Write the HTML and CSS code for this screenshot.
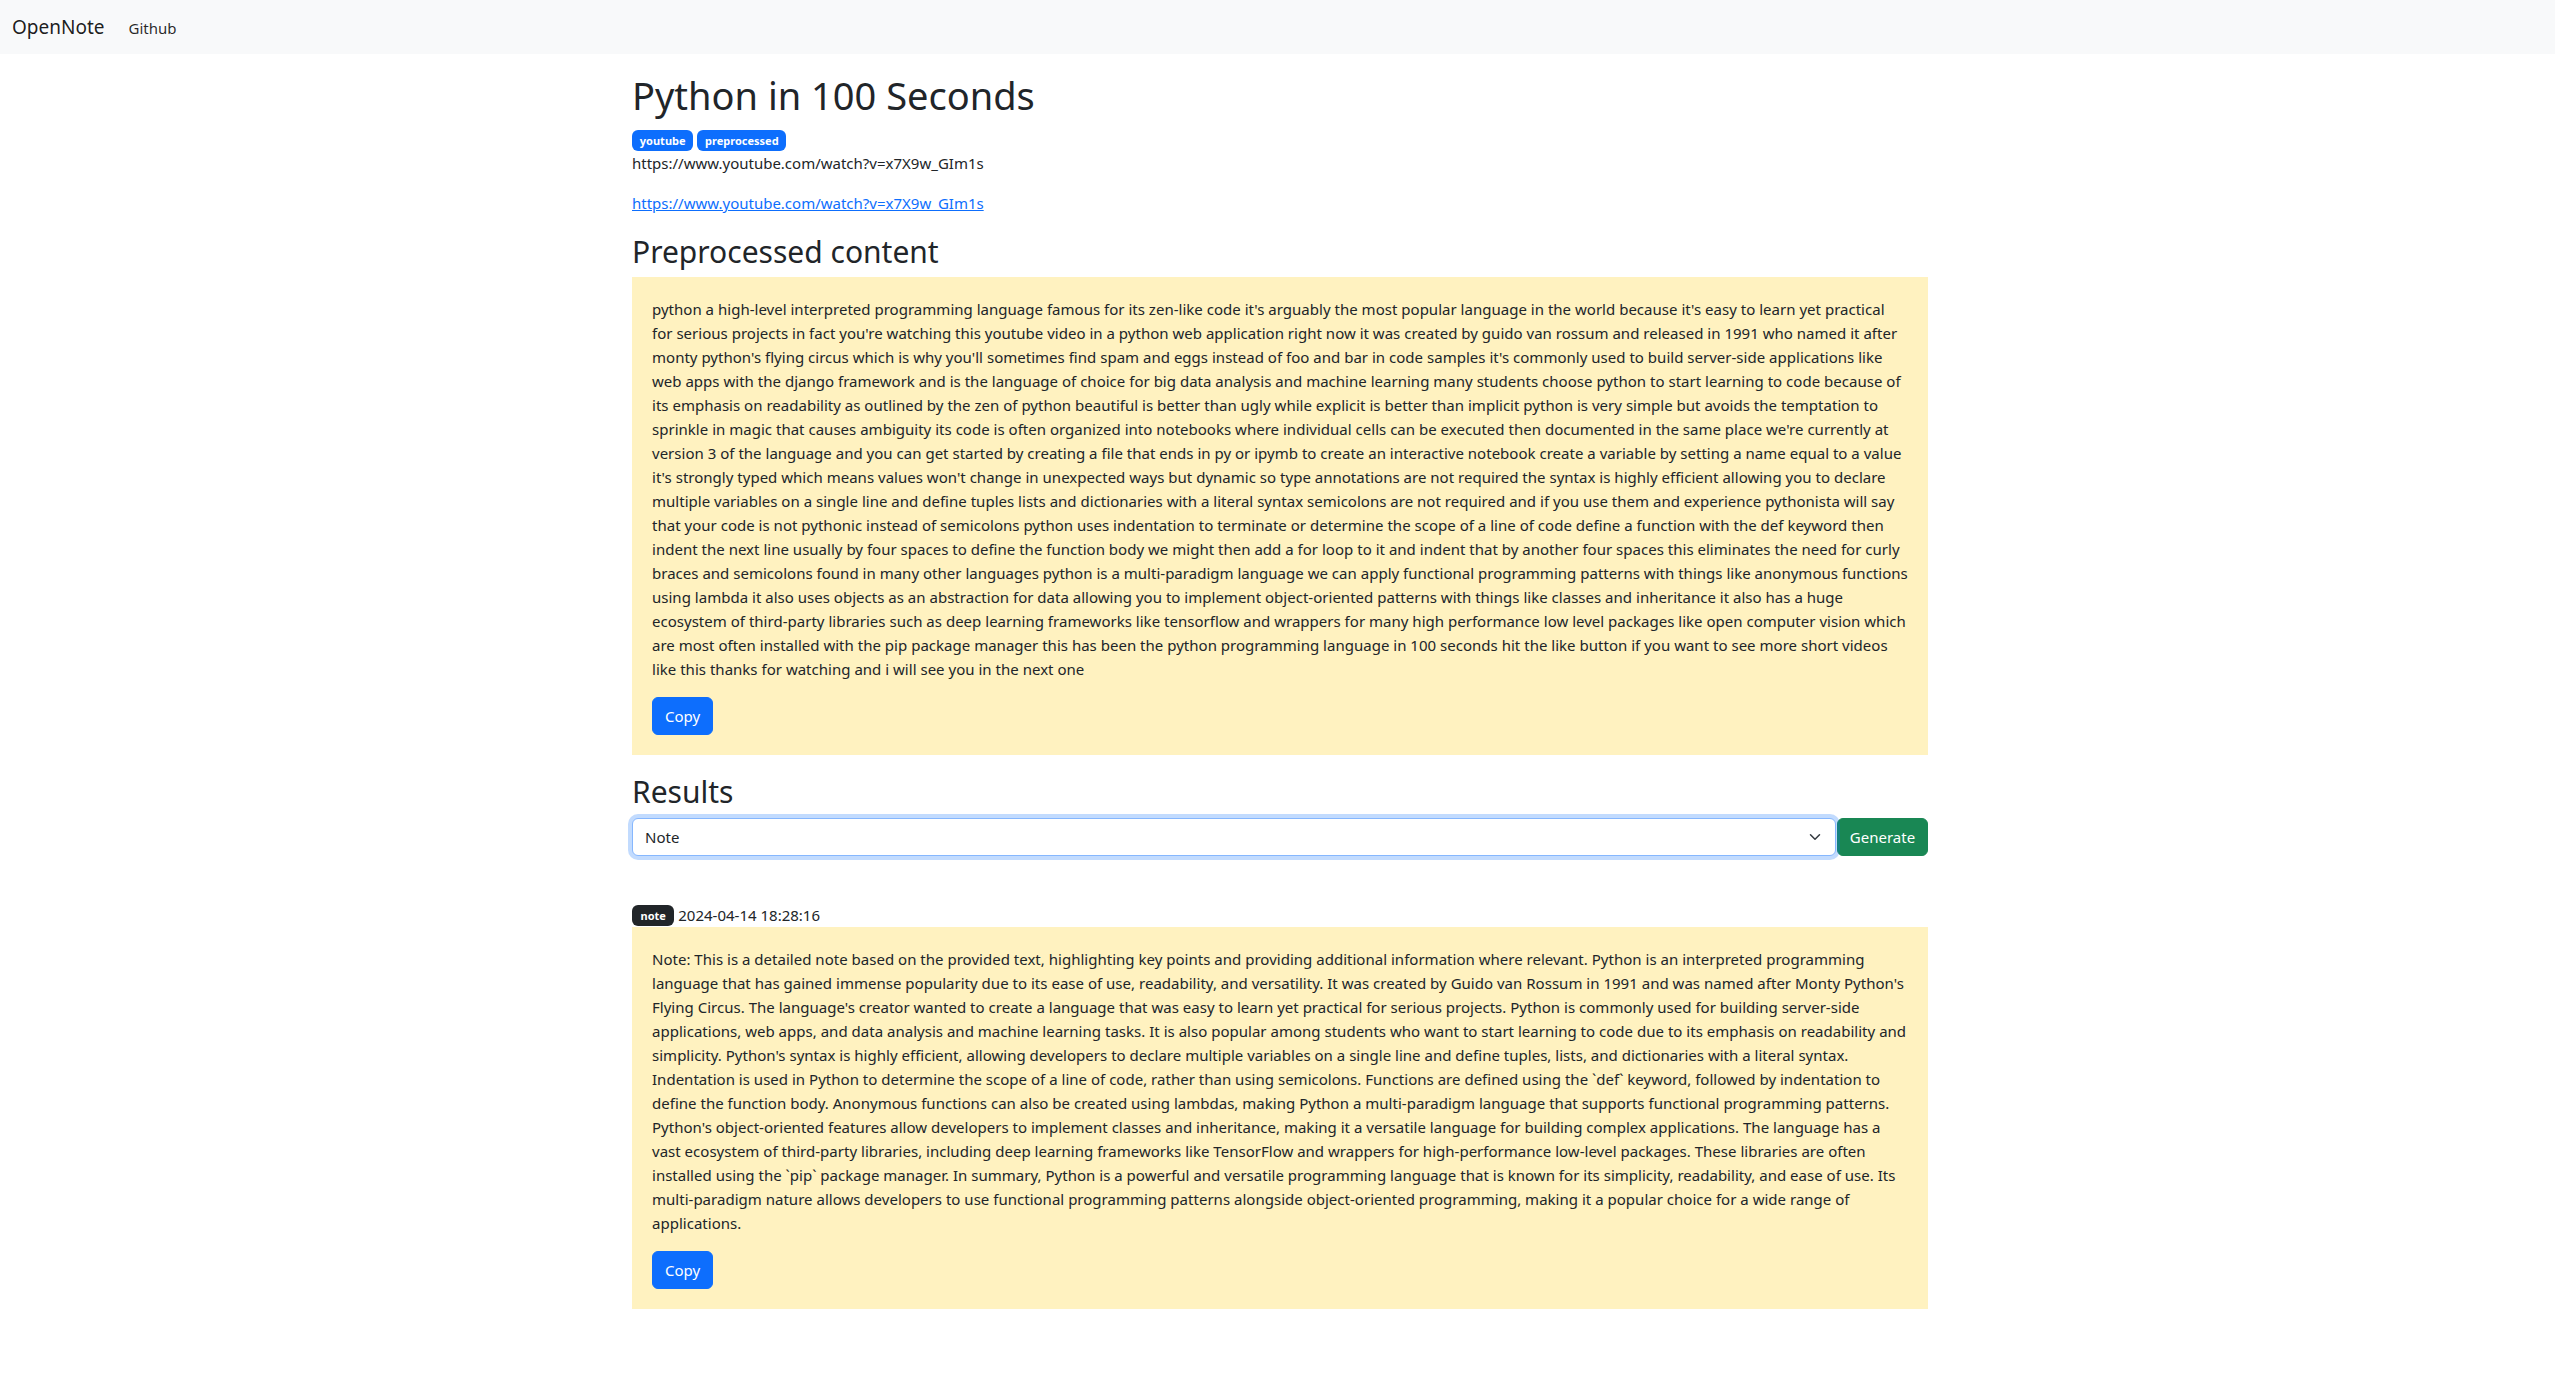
FILE: index.html
```html
<!DOCTYPE html>
<html lang="en">
<head>
<meta charset="utf-8">
<title>OpenNote - Python in 100 Seconds</title>
<link rel="stylesheet" href="styles.css">
</head>
<body>
<nav class="navbar">
  <a class="navbar-brand" href="#">OpenNote</a>
  <a class="nav-link" href="#">Github</a>
</nav>
<main class="container">
  <h1 class="page-title">Python in 100 Seconds</h1>
  <div class="badges"><span class="badge badge-primary">youtube</span> <span class="badge badge-primary">preprocessed</span></div>
  <p class="source-text">https://www.youtube.com/watch?v=x7X9w_GIm1s</p>
  <p class="source-link"><a href="#">https://www.youtube.com/watch?v=x7X9w_GIm1s</a></p>

  <h2 class="section-title">Preprocessed content</h2>
  <div class="panel">
    <p class="panel-text">python a high-level interpreted programming language famous for its zen-like code it's arguably the most popular language in the world because it's easy to learn yet practical for serious projects in fact you're watching this youtube video in a python web application right now it was created by guido van rossum and released in 1991 who named it after monty python's flying circus which is why you'll sometimes find spam and eggs instead of foo and bar in code samples it's commonly used to build server-side applications like web apps with the django framework and is the language of choice for big data analysis and machine learning many students choose python to start learning to code because of its emphasis on readability as outlined by the zen of python beautiful is better than ugly while explicit is better than implicit python is very simple but avoids the temptation to sprinkle in magic that causes ambiguity its code is often organized into notebooks where individual cells can be executed then documented in the same place we're currently at version 3 of the language and you can get started by creating a file that ends in py or ipymb to create an interactive notebook create a variable by setting a name equal to a value it's strongly typed which means values won't change in unexpected ways but dynamic so type annotations are not required the syntax is highly efficient allowing you to declare multiple variables on a single line and define tuples lists and dictionaries with a literal syntax semicolons are not required and if you use them and experience pythonista will say that your code is not pythonic instead of semicolons python uses indentation to terminate or determine the scope of a line of code define a function with the def keyword then indent the next line usually by four spaces to define the function body we might then add a for loop to it and indent that by another four spaces this eliminates the need for curly braces and semicolons found in many other languages python is a multi-paradigm language we can apply functional programming patterns with things like anonymous functions using lambda it also uses objects as an abstraction for data allowing you to implement object-oriented patterns with things like classes and inheritance it also has a huge ecosystem of third-party libraries such as deep learning frameworks like tensorflow and wrappers for many high performance low level packages like open computer vision which are most often installed with the pip package manager this has been the python programming language in 100 seconds hit the like button if you want to see more short videos like this thanks for watching and i will see you in the next one</p>
    <button class="btn btn-primary" type="button">Copy</button>
  </div>

  <h2 class="section-title">Results</h2>
  <div class="generate-row">
    <div class="select-wrap">
      <select class="form-select">
        <option>Note</option>
      </select>
      <svg class="select-chevron" width="16" height="12" viewBox="0 0 16 16" aria-hidden="true"><path d="m2 5 6 6 6-6" fill="none" stroke="#343a40" stroke-width="2" stroke-linecap="round" stroke-linejoin="round"/></svg>
    </div>
    <button class="btn btn-success" type="button">Generate</button>
  </div>

  <div class="results">
    <div class="result">
      <div class="result-meta"><span class="badge badge-dark">note</span> 2024-04-14 18:28:16</div>
      <div class="panel">
        <p class="panel-text">Note: This is a detailed note based on the provided text, highlighting key points and providing additional information where relevant. Python is an interpreted programming language that has gained immense popularity due to its ease of use, readability, and versatility. It was created by Guido van Rossum in 1991 and was named after Monty Python's Flying Circus. The language's creator wanted to create a language that was easy to learn yet practical for serious projects. Python is commonly used for building server-side applications, web apps, and data analysis and machine learning tasks. It is also popular among students who want to start learning to code due to its emphasis on readability and simplicity. Python's syntax is highly efficient, allowing developers to declare multiple variables on a single line and define tuples, lists, and dictionaries with a literal syntax. Indentation is used in Python to determine the scope of a line of code, rather than using semicolons. Functions are defined using the `def` keyword, followed by indentation to define the function body. Anonymous functions can also be created using lambdas, making Python a multi-paradigm language that supports functional programming patterns. Python's object-oriented features allow developers to implement classes and inheritance, making it a versatile language for building complex applications. The language has a vast ecosystem of third-party libraries, including deep learning frameworks like TensorFlow and wrappers for high-performance low-level packages. These libraries are often installed using the `pip` package manager. In summary, Python is a powerful and versatile programming language that is known for its simplicity, readability, and ease of use. Its multi-paradigm nature allows developers to use functional programming patterns alongside object-oriented programming, making it a popular choice for a wide range of applications.</p>
        <button class="btn btn-primary" type="button">Copy</button>
      </div>
    </div>
  </div>
</main>
</body>
</html>
```

FILE: styles.css
```css
* {
  box-sizing: border-box;
}

html, body {
  margin: 0;
  padding: 0;
  background: #fff;
}

body {
  font-family: "Noto Sans", "Open Sans", "Liberation Sans", sans-serif;
  font-size: 15px;
  line-height: 24px;
  color: #212529;
}

/* Navbar */
.navbar {
  display: flex;
  align-items: center;
  height: 54px;
  padding: 0 12px;
  background: #f8f9fa;
}

.navbar-brand {
  font-size: 19px;
  line-height: 30px;
  color: rgba(0, 0, 0, 0.9);
  text-decoration: none;
  margin-right: 16px;
}

.nav-link {
  font-size: 15px;
  line-height: 24px;
  padding: 2px 8px 0;
  color: rgba(0, 0, 0, 0.85);
  text-decoration: none;
}

/* Main container */
.container {
  max-width: 1320px;
  margin: 16px auto 0 calc(50% - 657.5px);
  padding: 0 12px 40px;
}

.page-title {
  font-size: 38px;
  font-weight: 400;
  line-height: 45px;
  padding-top: 3px;
  margin: 0 0 8px;
}

.badges {
  height: 25px;
  line-height: 25px;
}

.badge {
  display: inline-block;
  font-size: 11px;
  font-weight: 700;
  line-height: 1;
  color: #fff;
  padding: 4.7px 7.8px 4.7px;
  border-radius: 6px;
  vertical-align: 1px;
}

.badges .badge {
  vertical-align: -1px;
}

.badge-primary {
  background: #0d6efd;
}

.badge-dark {
  background: #212529;
  padding-left: 8.5px;
  padding-right: 8.5px;
}

.source-text {
  margin: 0 0 16px;
}

.source-link {
  margin: 0 0 16px;
}

.source-link a {
  color: #0d6efd;
  text-decoration: underline;
}

.section-title {
  font-size: 30px;
  font-weight: 400;
  line-height: 35.4px;
  padding-top: 3px;
  margin: 0 0 8px;
}

/* Yellow panels */
.panel {
  background: #fff2c0;
  padding: 20px;
  margin-bottom: 16px;
}

.panel-text {
  margin: 0 0 16px;
  letter-spacing: 0.016px;
}

/* Buttons */
.btn {
  display: inline-block;
  font-family: inherit;
  font-size: 15px;
  line-height: 24px;
  padding: 6px 12px;
  border: 1px solid transparent;
  border-radius: 6px;
  color: #fff;
  cursor: pointer;
}

.btn-primary {
  background: #0d6efd;
  border-color: #0d6efd;
}

.btn-success {
  background: #198754;
  border-color: #198754;
  width: 91px;
  padding: 6px 0;
  text-align: center;
}

/* Generate row */
.generate-row {
  display: flex;
  gap: 1px;
  align-items: stretch;
}

.select-wrap {
  position: relative;
  flex: 1;
}

.form-select {
  display: block;
  width: 100%;
  height: 38px;
  font-family: inherit;
  font-size: 15px;
  line-height: 24px;
  color: #212529;
  padding: 6px 36px 6px 12px;
  background: #fff;
  border: 1px solid #86b7fe;
  border-radius: 6px;
  box-shadow: 0 0 0 4px rgba(13, 110, 253, 0.25);
  appearance: none;
  -webkit-appearance: none;
  outline: none;
}

.select-chevron {
  position: absolute;
  right: 13px;
  top: 13px;
  pointer-events: none;
}

/* Results list */
.results {
  margin-top: 47px;
}

.result-meta {
  line-height: 24px;
}

.result-meta .badge {
  vertical-align: 1px;
}

.result .panel {
  margin-bottom: 0;
}
```
